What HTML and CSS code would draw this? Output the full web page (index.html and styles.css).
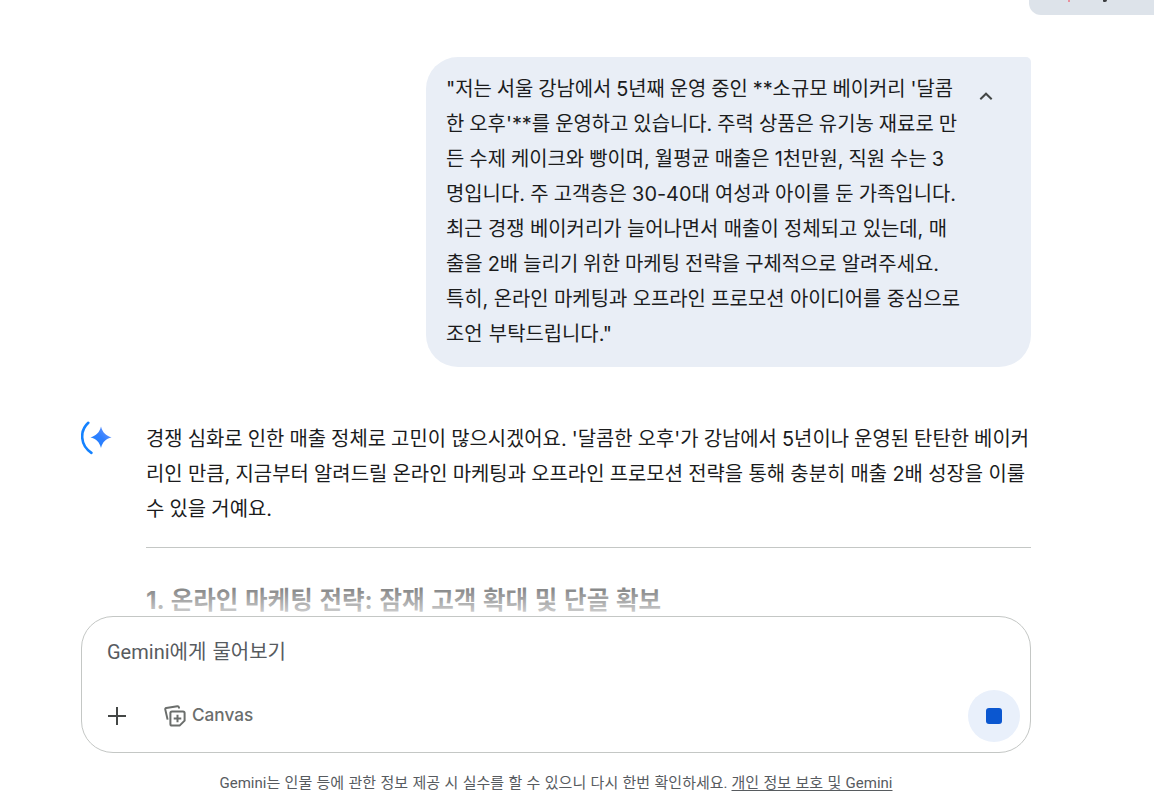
FILE: index.html
```html
<!DOCTYPE html>
<html lang="ko">
<head>
<meta charset="utf-8">
<title>Gemini</title>
<link rel="stylesheet" href="styles.css">
</head>
<body>
<main class="chat">
  <section class="history">
    <div class="chip"><i class="chip-mark"></i><i class="chip-tail"></i></div>
    <div class="column">
      <div class="bubble">
        <div class="lines prompt">
          <p class="w507">"저는 서울 강남에서 5년째 운영 중인 **소규모 베이커리 '달콤</p>
          <p class="w511">한 오후'**를 운영하고 있습니다. 주력 상품은 유기농 재료로 만</p>
          <p class="w498">든 수제 케이크와 빵이며, 월평균 매출은 1천만원, 직원 수는 3</p>
          <p class="w510">명입니다. 주 고객층은 30-40대 여성과 아이를 둔 가족입니다.</p>
          <p class="w501">최근 경쟁 베이커리가 늘어나면서 매출이 정체되고 있는데, 매</p>
          <p class="w493">출을 2배 늘리기 위한 마케팅 전략을 구체적으로 알려주세요.</p>
          <p class="w514">특히, 온라인 마케팅과 오프라인 프로모션 아이디어를 중심으로</p>
          <p class="w166">조언 부탁드립니다."</p>
        </div>
        <svg class="chevron" width="14" height="9" viewBox="0 0 14 9"><path d="M1.3 7.3 7 1.7l5.7 5.6" fill="none" stroke="#444746" stroke-width="2"/></svg>
      </div>
      <div class="reply">
        <svg class="spark" width="32" height="34" viewBox="0 0 32 34">
          <defs><linearGradient id="g" x1="0" y1="1" x2="1" y2="0"><stop offset="0" stop-color="#1380ff"/><stop offset=".5" stop-color="#307fff"/><stop offset="1" stop-color="#7ba0ff"/></linearGradient></defs>
          <path d="M7.300 1.800C-1.300 9.500-1.300 24 10.400 31.800" fill="none" stroke="#1482ff" stroke-width="2.600" stroke-linecap="round"/>
          <path d="M20 5.500c1.600 6 4.800 9.300 10.600 10.800C24.800 17.800 21.600 21 20 27 18.400 21 15.200 17.800 9.400 16.300 15.200 14.800 18.400 11.500 20 5.500z" fill="url(#g)"/>
        </svg>
        <div class="lines answer">
          <p class="w883">경쟁 심화로 인한 매출 정체로 고민이 많으시겠어요. '달콤한 오후'가 강남에서 5년이나 운영된 탄탄한 베이커</p>
          <p class="w879">리인 만큼, 지금부터 알려드릴 온라인 마케팅과 오프라인 프로모션 전략을 통해 충분히 매출 2배 성장을 이룰</p>
          <p class="w126">수 있을 거예요.</p>
          <hr>
          <h2>1. 온라인 마케팅 전략: 잠재 고객 확대 및 단골 확보</h2>
        </div>
      </div>
    </div>
    <div class="fade"></div>
  </section>
  <section class="composer">
    <div class="placeholder">Gemini에게 물어보기</div>
    <div class="tools">
      <svg class="plus" width="18" height="18" viewBox="0 0 18 18"><path d="M9 0v18M0 9h18" stroke="#444746" stroke-width="2"/></svg>
      <svg class="canvas-icon" width="22" height="22" viewBox="0 0 22 22" fill="none" stroke="#6b6e6c" stroke-width="2">
        <path d="M3.600 14.600 1.300 4.600Q1 3.300 2.300 3L13.300 1.200Q14.700 1 15 2.600V3.500"/>
        <path d="M8 6.400H19Q20.600 6.400 20.600 8V15.600L15.600 20.600H8Q6.400 20.600 6.400 19V8Q6.400 6.400 8 6.400z"/>
        <path d="M13.500 9.700v7.600M9.700 13.500h7.600"/>
      </svg>
      <span class="canvas-label">Canvas</span>
      <button class="stop"><i></i></button>
    </div>
  </section>
  <footer><span class="notice">Gemini는 인물 등에 관한 정보 제공 시 실수를 할 수 있으니 다시 한번 확인하세요.</span><a>개인 정보 보호 및 Gemini</a></footer>
</main>
</body>
</html>
```
FILE: styles.css
```css
* { box-sizing: border-box; }
body { margin: 0; background: #fff; color: #1b1c1d; font-family: Inter, "Noto Sans CJK KR", sans-serif; }
p, h2 { margin: 0; white-space: nowrap; }
.chat { display: flex; flex-direction: column; width: 1154px; height: 808px; overflow: hidden; }
.history { position: relative; height: 616px; overflow: hidden; }
.chip { display: flex; height: 15px; width: 140px; margin-left: 1029px; background: #dde3ea; border-radius: 0 0 0 12px; overflow: hidden; }
.chip-mark { width: 2px; height: 2px; margin-left: 39px; background: #e8929f; }
.chip-tail { width: 4px; height: 2px; margin-left: 33px; background: #3a3c3e; border-radius: 0 0 2px 1px; }
.column { width: 950px; margin-left: 81px; }
.bubble { display: flex; align-items: flex-start; width: 605px; height: 310px; margin: 42px 0 0 345px; padding: 15px 0 0 20px; background: #e9eef6; border-radius: 32px 5px 32px 32px; }
.lines p { font-size: 19.9px; line-height: 35px; word-spacing: -2.5px; text-align-last: justify; }
.prompt { width: 533px; }
.w507 { width: 507px; }
.w511 { width: 511px; }
.w498 { width: 498px; }
.w510 { width: 510px; }
.w501 { width: 501px; }
.w493 { width: 493px; }
.w514 { width: 514px; }
.w166 { width: 166px; }
.w883 { width: 883px; }
.w879 { width: 879px; }
.w126 { width: 126px; }
.chevron { margin-top: 20px; }
.reply { display: flex; margin-top: 54px; }
.spark { flex: none; margin-right: 33px; }
.answer { width: 885px; padding-top: 1px; }
hr { height: 1px; margin: 20px 0 35px; border: 0; background: #c4c7c5; }
h2 { width: 515px; font-size: 24.5px; line-height: 35px; font-weight: 700; word-spacing: -4px; text-align-last: justify; }
.fade { position: absolute; left: 0; right: 0; bottom: 0; height: 56px; background: linear-gradient(rgba(255,255,255,.1), rgba(255,255,255,.82)); }
.composer { width: 950px; height: 137px; margin-left: 81px; padding: 17px 10px 0 25px; border: 1px solid #c4c7c5; border-radius: 32px; }
.placeholder { width: 179px; font-family: Roboto, "Noto Sans CJK KR", sans-serif; font-size: 20px; line-height: 36px; color: #575b5f; white-space: nowrap; word-spacing: -2px; text-align-last: justify; }
.tools { display: flex; align-items: center; height: 52px; margin-top: 20px; }
.plus { margin-left: 1px; }
.canvas-icon { margin-left: 38px; }
.canvas-label { margin: -3px 0 0 6px; color: #6b6e6c; font: 500 17.2px/24px Inter, sans-serif; }
.stop { display: flex; align-items: center; justify-content: center; width: 52px; height: 52px; margin-left: auto; padding: 0; border: 0; border-radius: 50%; background: #e9f0fb; }
.stop i { width: 16px; height: 16px; border-radius: 3px; background: #0b57d0; }
footer { display: flex; justify-content: space-between; width: 673px; margin: 19px 0 0 219.5px; font-family: Roboto, "Noto Sans CJK KR", sans-serif; font-size: 15px; line-height: 22px; color: #575b5f; white-space: nowrap; word-spacing: -1px; }
.notice { width: 508px; text-align-last: justify; }
footer a { width: 161px; text-align-last: justify; text-decoration: underline; text-underline-offset: 2px; text-decoration-skip-ink: none; }
```
